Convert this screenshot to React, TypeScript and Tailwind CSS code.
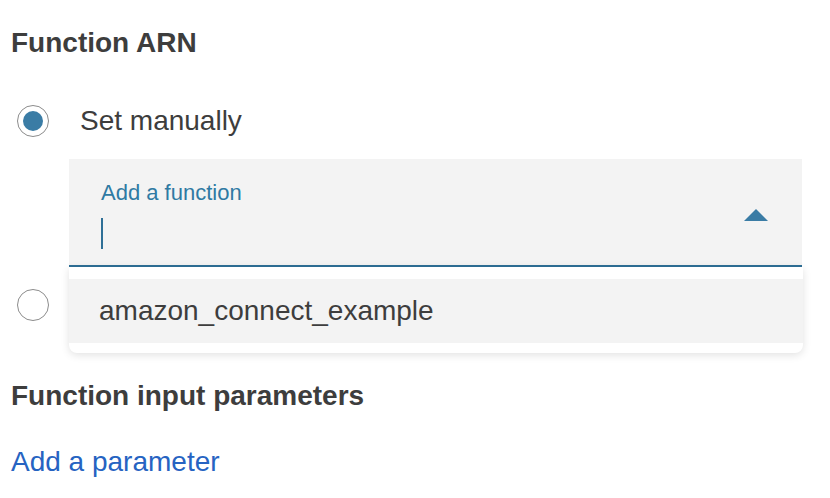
import { useState } from 'react';

function Radio({ checked }: { checked?: boolean }) {
  return (
    <span className="flex h-8 w-8 shrink-0 items-center justify-center rounded-full border border-[#8c8c8c] bg-white">
      {checked && <span className="h-5 w-5 rounded-full bg-[#3a7ca5]" />}
    </span>
  );
}

export default function App() {
  const [open] = useState(true);

  return (
    <div className="h-[498px] w-[830px] overflow-hidden bg-white font-['Liberation_Sans',Arial,sans-serif] text-[#3d3d3d]">
      <h2 className="pl-[11px] pt-[27px] text-[28px] font-bold leading-[32px]">Function ARN</h2>

      <div className="mt-[46px] pl-[17px]">
        <label className="flex items-center gap-[31px]">
          <Radio checked />
          <span className="text-[28px] leading-[32px]">Set manually</span>
        </label>

        <div className="relative mt-[22px] ml-[52px] w-[733px]">
          <div className="flex border-b-2 border-[#2e6f96] bg-[#f3f3f3] pb-[16px] pl-[32px] pr-[34px] pt-[21px]">
            <div className="flex flex-1 flex-col">
              <span className="text-[22px] leading-[26px] text-[#2f7aa3]">Add a function</span>
              <span className="mt-[12px] h-[31px] w-[2px] bg-[#2e6f96]" />
            </div>
            <svg width="24" height="12" viewBox="0 0 24 12" className="self-center">
              <path d="M0 12 L12 0 L24 12 Z" fill="#3a7ca5" />
            </svg>
          </div>

          {open && (
            <ul className="absolute left-0 top-full z-10 w-[734px] rounded-b-lg bg-white pb-[10px] pt-[12px] shadow-[0_2px_8px_rgba(0,0,0,0.12)]">
              <li className="flex h-16 items-center bg-[#f3f3f3] pl-[30px] text-[28px] leading-[32px]">
                amazon_connect_example
              </li>
            </ul>
          )}
        </div>

        {/* second option's label sits under the open dropdown */}
        <label className="mt-[22px] flex h-8 items-center" aria-label="Set dynamically">
          <Radio />
        </label>
      </div>

      <h2 className="mt-[59px] pl-[11px] text-[28px] font-bold leading-[32px]">Function input parameters</h2>

      <a href="#" className="mt-[34px] block pl-[11px] text-[28px] leading-[32px] text-[#2663c2]">
        Add a parameter
      </a>
    </div>
  );
}
